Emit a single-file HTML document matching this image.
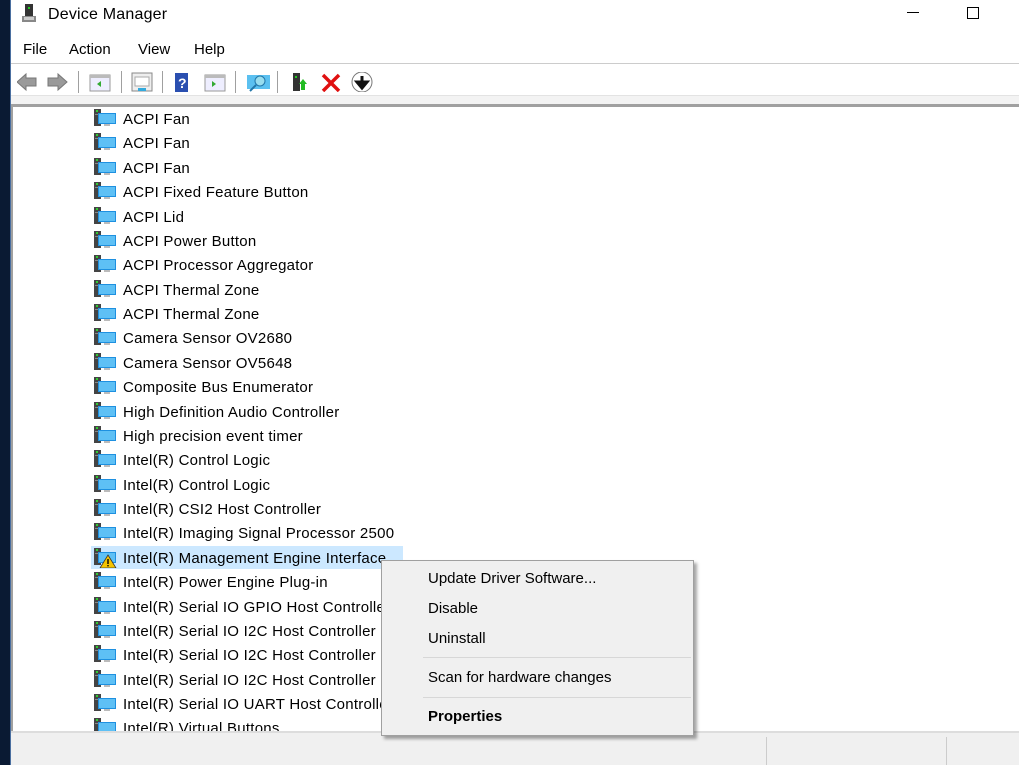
<!DOCTYPE html>
<html><head><meta charset="utf-8"><style>
*{margin:0;padding:0;box-sizing:border-box}
body{width:1019px;height:765px;position:relative;overflow:hidden;background:#fff;font-family:"Liberation Sans",sans-serif;color:#000}
.abs{position:absolute}
.menu span{position:absolute;top:41px;font-size:15px}
.row{position:absolute;left:94px;height:24px;width:400px}
.row svg{position:absolute;left:0;top:3px}
.row span{position:absolute;left:29px;top:5px;font-size:15px;white-space:nowrap;letter-spacing:0.25px}
.cm span{position:absolute;left:46px;font-size:15px}
.sep{position:absolute;width:1px;height:22px;background:#a0a0a0;top:71px}
</style></head><body>
<div class="abs" style="left:0;top:0;width:10px;height:765px;background:#0a1a33"></div>
<div class="abs" style="left:10px;top:0;width:1px;height:765px;background:#4a6fa0"></div>
<svg class="abs" style="left:21px;top:4px" width="16" height="20"><rect x="4" y="0" width="8" height="12" fill="#333"/><rect x="7" y="3" width="2" height="2" fill="#2c2"/><rect x="1" y="12" width="14" height="6" fill="#888"/><rect x="3" y="13" width="10" height="3" fill="#ccc"/></svg>
<div class="abs" style="left:48px;top:6px;font-size:16px;letter-spacing:0.2px">Device Manager</div>
<div class="abs" style="left:907px;top:12px;width:12px;height:1px;background:#000"></div>
<div class="abs" style="left:967px;top:7px;width:12px;height:12px;border:1px solid #000"></div>
<div class="menu"><span style="left:23px">File</span><span style="left:69px">Action</span><span style="left:138px">View</span><span style="left:194px">Help</span></div>
<div class="abs" style="left:11px;top:63px;width:1008px;height:1px;background:#ccc"></div>
<svg class="abs" style="left:17px;top:72px" width="360" height="20">
<path d="M0 10 L9 2 V6 H19 V14 H9 V18 Z" fill="#9a9a9a" stroke="#777"/>
<path d="M50 10 L41 2 V6 H31 V14 H41 V18 Z" fill="#9a9a9a" stroke="#777"/>
<rect x="73" y="3" width="20" height="16" fill="#eef" stroke="#999"/><rect x="73" y="3" width="20" height="3" fill="#bbb"/><path d="M84 9 L80 12 L84 15Z" fill="#3a3"/>
<rect x="115" y="1" width="20" height="18" fill="#eee" stroke="#888"/><rect x="118" y="5" width="14" height="9" fill="#fff" stroke="#aaa"/><rect x="121" y="16" width="8" height="3" fill="#3ad"/>
<rect x="158" y="1" width="13" height="19" fill="#2a4fb0"/><text x="161" y="16" fill="#fff" font-size="14" font-weight="bold" font-family="Liberation Sans">?</text>
<rect x="188" y="3" width="20" height="16" fill="#eef" stroke="#999"/><rect x="188" y="3" width="20" height="3" fill="#bbb"/><path d="M195 9 L199 12 L195 15Z" fill="#3a3"/>
<rect x="230" y="3" width="23" height="14" fill="#5bc0f0"/><circle cx="243" cy="9" r="5" fill="#9de" stroke="#27a"/><path d="M239 13 L233 19" stroke="#27a" stroke-width="2"/>
<rect x="276" y="1" width="7" height="18" fill="#333"/><rect x="278" y="4" width="2" height="2" fill="#2c2"/><path d="M282 12 L286 7 L290 12 H288 V18 H284 V12Z" fill="#2b2"/>
<path d="M306 3 L322 19 M322 3 L306 19" stroke="#e01010" stroke-width="3.5"/>
<circle cx="345" cy="10" r="10" fill="#fff" stroke="#777"/><path d="M345 4 V11 M340 10 L345 16 L350 10Z" stroke="#111" stroke-width="3" fill="#111"/>
</svg>
<div class="sep" style="left:78px"></div><div class="sep" style="left:121px"></div><div class="sep" style="left:162px"></div><div class="sep" style="left:235px"></div><div class="sep" style="left:277px"></div>
<div class="abs" style="left:11px;top:95px;width:1008px;height:10px;background:#f3f3f3;border-top:1px solid #e3e3e3"></div>
<div class="abs" style="left:11px;top:104px;width:1008px;height:3px;background:#a0a0a0"></div>
<div class="abs" style="left:11px;top:104px;width:2px;height:628px;background:#a0a0a0"></div>
<div class="abs" style="left:91px;top:546px;width:312px;height:23px;background:#cce8ff"></div>
<svg width="0" height="0" style="position:absolute"><defs><g id="ic"><rect x="0" y="0" width="7" height="17" fill="#444"/><rect x="2" y="1" width="2" height="2" fill="#3c3"/><rect x="1" y="5" width="5" height="1" fill="#888"/><rect x="4" y="4" width="18" height="11" fill="#1e90e0"/><rect x="5" y="5" width="16" height="9" fill="#5ec0f5"/><rect x="10" y="15" width="6" height="2" fill="#bbb"/></g></defs></svg>
<div class="row" style="top:106px"><svg width="23" height="18"><use href="#ic"/></svg><span>ACPI Fan</span></div>
<div class="row" style="top:130px"><svg width="23" height="18"><use href="#ic"/></svg><span>ACPI Fan</span></div>
<div class="row" style="top:155px"><svg width="23" height="18"><use href="#ic"/></svg><span>ACPI Fan</span></div>
<div class="row" style="top:179px"><svg width="23" height="18"><use href="#ic"/></svg><span>ACPI Fixed Feature Button</span></div>
<div class="row" style="top:204px"><svg width="23" height="18"><use href="#ic"/></svg><span>ACPI Lid</span></div>
<div class="row" style="top:228px"><svg width="23" height="18"><use href="#ic"/></svg><span>ACPI Power Button</span></div>
<div class="row" style="top:252px"><svg width="23" height="18"><use href="#ic"/></svg><span>ACPI Processor Aggregator</span></div>
<div class="row" style="top:277px"><svg width="23" height="18"><use href="#ic"/></svg><span>ACPI Thermal Zone</span></div>
<div class="row" style="top:301px"><svg width="23" height="18"><use href="#ic"/></svg><span>ACPI Thermal Zone</span></div>
<div class="row" style="top:325px"><svg width="23" height="18"><use href="#ic"/></svg><span>Camera Sensor OV2680</span></div>
<div class="row" style="top:350px"><svg width="23" height="18"><use href="#ic"/></svg><span>Camera Sensor OV5648</span></div>
<div class="row" style="top:374px"><svg width="23" height="18"><use href="#ic"/></svg><span>Composite Bus Enumerator</span></div>
<div class="row" style="top:399px"><svg width="23" height="18"><use href="#ic"/></svg><span>High Definition Audio Controller</span></div>
<div class="row" style="top:423px"><svg width="23" height="18"><use href="#ic"/></svg><span>High precision event timer</span></div>
<div class="row" style="top:447px"><svg width="23" height="18"><use href="#ic"/></svg><span>Intel(R) Control Logic</span></div>
<div class="row" style="top:472px"><svg width="23" height="18"><use href="#ic"/></svg><span>Intel(R) Control Logic</span></div>
<div class="row" style="top:496px"><svg width="23" height="18"><use href="#ic"/></svg><span>Intel(R) CSI2 Host Controller</span></div>
<div class="row" style="top:520px"><svg width="23" height="18"><use href="#ic"/></svg><span>Intel(R) Imaging Signal Processor 2500</span></div>
<div class="row" style="top:545px"><svg width="23" height="20"><use href="#ic"/><path d="M14 7 L22 20 H6Z" fill="#f5c400" stroke="#333" stroke-width=".8"/><rect x="13.3" y="11" width="1.4" height="5" fill="#000"/><rect x="13.3" y="17" width="1.4" height="1.4" fill="#000"/></svg><span>Intel(R) Management Engine Interface</span></div>
<div class="row" style="top:569px"><svg width="23" height="18"><use href="#ic"/></svg><span>Intel(R) Power Engine Plug-in</span></div>
<div class="row" style="top:594px"><svg width="23" height="18"><use href="#ic"/></svg><span>Intel(R) Serial IO GPIO Host Controller</span></div>
<div class="row" style="top:618px"><svg width="23" height="18"><use href="#ic"/></svg><span>Intel(R) Serial IO I2C Host Controller</span></div>
<div class="row" style="top:642px"><svg width="23" height="18"><use href="#ic"/></svg><span>Intel(R) Serial IO I2C Host Controller</span></div>
<div class="row" style="top:667px"><svg width="23" height="18"><use href="#ic"/></svg><span>Intel(R) Serial IO I2C Host Controller</span></div>
<div class="row" style="top:691px"><svg width="23" height="18"><use href="#ic"/></svg><span>Intel(R) Serial IO UART Host Controller</span></div>
<div class="row" style="top:715px;height:17px;overflow:hidden"><svg width="23" height="18"><use href="#ic"/></svg><span>Intel(R) Virtual Buttons</span></div>
<div class="abs" style="left:11px;top:731px;width:1008px;height:34px;background:#f0f0f0;border-top:2px solid #ddd"></div>
<div class="abs" style="left:766px;top:737px;width:1px;height:28px;background:#ccc"></div>
<div class="abs" style="left:946px;top:737px;width:1px;height:28px;background:#ccc"></div>
<div class="abs cm" style="left:381px;top:560px;width:313px;height:176px;background:#f0f0f0;border:1px solid #a0a0a0;box-shadow:3px 3px 3px rgba(0,0,0,.35)">
<span style="top:9px">Update Driver Software...</span>
<span style="top:39px">Disable</span>
<span style="top:69px">Uninstall</span>
<div class="abs" style="left:41px;top:96px;width:268px;height:1px;background:#d7d7d7"></div>
<span style="top:108px">Scan for hardware changes</span>
<div class="abs" style="left:41px;top:136px;width:268px;height:1px;background:#d7d7d7"></div>
<span style="top:147px;font-weight:bold">Properties</span>
</div>
</body></html>
